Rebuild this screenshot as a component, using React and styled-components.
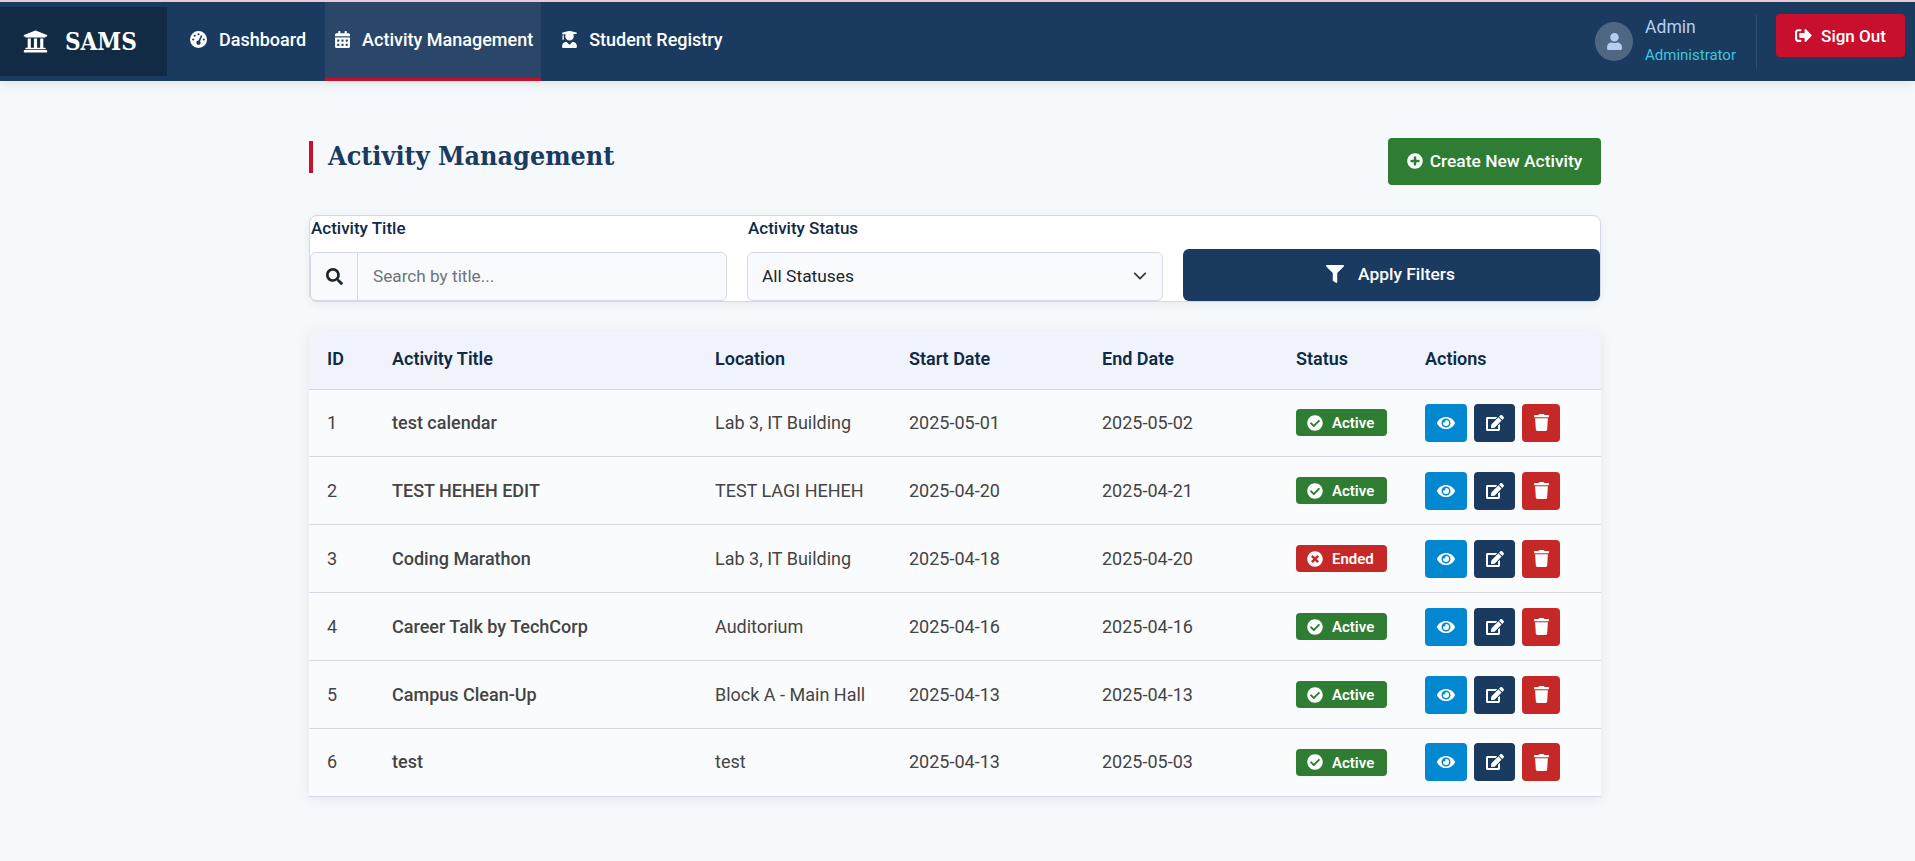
import React from "react";
import styled, { createGlobalStyle } from "styled-components";
import {
  FaUniversity,
  FaCalendarAlt,
  FaUserGraduate,
  FaUser,
  FaSignOutAlt,
  FaPlusCircle,
  FaSearch,
  FaFilter,
  FaCheckCircle,
  FaTimesCircle,
  FaEye,
  FaEdit,
  FaTrash,
} from "react-icons/fa";
import { FaGaugeHigh } from "react-icons/fa6";

const activities = [
  { id: 1, title: "test calendar", location: "Lab 3, IT Building", start: "2025-05-01", end: "2025-05-02", status: "Active" },
  { id: 2, title: "TEST HEHEH EDIT", location: "TEST LAGI HEHEH", start: "2025-04-20", end: "2025-04-21", status: "Active" },
  { id: 3, title: "Coding Marathon", location: "Lab 3, IT Building", start: "2025-04-18", end: "2025-04-20", status: "Ended" },
  { id: 4, title: "Career Talk by TechCorp", location: "Auditorium", start: "2025-04-16", end: "2025-04-16", status: "Active" },
  { id: 5, title: "Campus Clean-Up", location: "Block A - Main Hall", start: "2025-04-13", end: "2025-04-13", status: "Active" },
  { id: 6, title: "test", location: "test", start: "2025-04-13", end: "2025-05-03", status: "Active" },
];

function App() {
  return (
    <>
      <GlobalStyle />
      <Navbar>
        <Logo>
          <FaUniversity size={25} />
          <span>SAMS</span>
        </Logo>
        <NavLinks>
          <NavItem $iconWidth={17}>
            <FaGaugeHigh />
            Dashboard
          </NavItem>
          <NavItem $active $iconWidth={15}>
            <FaCalendarAlt />
            Activity Management
          </NavItem>
          <NavItem $iconWidth={15}>
            <FaUserGraduate />
            Student Registry
          </NavItem>
        </NavLinks>
        <UserArea>
          <Avatar>
            <FaUser size={17} />
          </Avatar>
          <UserInfo>
            <UserName>Admin</UserName>
            <UserRole>Administrator</UserRole>
          </UserInfo>
          <SignOut>
            <FaSignOutAlt size={17} />
            Sign Out
          </SignOut>
        </UserArea>
      </Navbar>

      <Main>
        <PageHeader>
          <PageTitle>Activity Management</PageTitle>
          <CreateButton>
            <FaPlusCircle size={16} />
            Create New Activity
          </CreateButton>
        </PageHeader>

        <FilterCard>
          <Field>
            <Label>Activity Title</Label>
            <InputGroup>
              <Addon>
                <FaSearch size={17} />
              </Addon>
              <SearchInput placeholder="Search by title..." />
            </InputGroup>
          </Field>
          <Field>
            <Label>Activity Status</Label>
            <SelectBox>
              All Statuses
              <svg width="14" height="14" viewBox="0 0 16 16" fill="none" stroke="#343a40" strokeWidth="2" strokeLinecap="round" strokeLinejoin="round">
                <path d="m2 5 6 6 6-6" />
              </svg>
            </SelectBox>
          </Field>
          <ApplyButton>
            <FaFilter size={18} />
            Apply Filters
          </ApplyButton>
        </FilterCard>

        <TableCard>
          <Table>
            <colgroup>
              <col width="65" />
              <col width="323" />
              <col width="194" />
              <col width="193" />
              <col width="194" />
              <col width="129" />
              <col />
            </colgroup>
            <thead>
              <tr>
                <Th>ID</Th>
                <Th>Activity Title</Th>
                <Th>Location</Th>
                <Th>Start Date</Th>
                <Th>End Date</Th>
                <Th>Status</Th>
                <Th>Actions</Th>
              </tr>
            </thead>
            <tbody>
              {activities.map((a) => (
                <Row key={a.id}>
                  <Td>{a.id}</Td>
                  <TitleCell>{a.title}</TitleCell>
                  <Td>{a.location}</Td>
                  <Td>{a.start}</Td>
                  <Td>{a.end}</Td>
                  <ControlCell>
                    <Badge $ended={a.status === "Ended"}>
                      {a.status === "Ended" ? <FaTimesCircle size={16} /> : <FaCheckCircle size={16} />}
                      <span>{a.status}</span>
                    </Badge>
                  </ControlCell>
                  <ControlCell>
                    <Actions>
                      <ActionButton $bg="#0288d1" $w={42}>
                        <FaEye size={18} />
                      </ActionButton>
                      <ActionButton $bg="#1a3a5f" $w={41}>
                        <FaEdit size={18} />
                      </ActionButton>
                      <ActionButton $bg="#c62828" $w={38}>
                        <FaTrash size={17} />
                      </ActionButton>
                    </Actions>
                  </ControlCell>
                </Row>
              ))}
            </tbody>
          </Table>
        </TableCard>
      </Main>
    </>
  );
}

export default App;

const GlobalStyle = createGlobalStyle`
  * {
    box-sizing: border-box;
  }
  body {
    margin: 0;
    min-height: 861px;
    background: #f5f9fc;
    font-family: Roboto, "Liberation Sans", sans-serif;
    color: #444;
    overflow: hidden;
  }
`;

const Navbar = styled.header`
  height: 81px;
  display: flex;
  align-items: stretch;
  background: #1a3a5f;
  border-top: 2px solid #e8cbd4;
  box-shadow: 0 2px 10px rgba(0, 0, 0, 0.1);
`;

const Logo = styled.div`
  width: 167px;
  margin: 5px 13px 5px 0;
  padding-left: 23px;
  display: flex;
  align-items: center;
  gap: 17px;
  background: #122b44;
  color: #fff;
  span {
    font-family: "DejaVu Serif", serif;
    font-weight: 700;
    font-size: 24px;
    font-stretch: condensed;
  }
`;

const NavLinks = styled.nav`
  display: flex;
  gap: 11px;
`;

const NavItem = styled.a`
  display: flex;
  align-items: center;
  gap: 12px;
  padding: 0 8px 2px 10px;
  color: #fff;
  font-size: 18px;
  font-weight: 500;
  background: ${(props) => (props.$active ? "rgba(255, 255, 255, 0.07)" : "transparent")};
  border-bottom: 3px solid ${(props) => (props.$active ? "#c8102e" : "transparent")};
  svg {
    width: ${(props) => props.$iconWidth}px;
    height: 17px;
    flex: none;
  }
`;

const UserArea = styled.div`
  margin-left: auto;
  display: flex;
  align-items: center;
  padding-right: 10px;
`;

const Avatar = styled.div`
  width: 38px;
  height: 39px;
  border-radius: 50%;
  background: #4f6783;
  color: #b5cdf0;
  display: flex;
  align-items: center;
  justify-content: center;
`;

const UserInfo = styled.div`
  margin-left: 12px;
  padding: 3px 20px 5px 0;
  height: 55px;
  border-right: 1px solid #2f4c6e;
  display: flex;
  flex-direction: column;
  justify-content: space-between;
`;

const UserName = styled.div`
  font-size: 17.6px;
  line-height: 21px;
  color: #b5cdf0;
`;

const UserRole = styled.div`
  font-size: 15px;
  line-height: 18px;
  color: #3cc8dc;
`;

const SignOut = styled.button`
  margin-left: 19px;
  width: 129px;
  height: 43px;
  margin-bottom: 12px;
  border: 0;
  border-radius: 4px;
  background: #c8102e;
  color: #fff;
  font-family: inherit;
  font-size: 17px;
  font-weight: 500;
  display: flex;
  align-items: center;
  justify-content: center;
  gap: 9px;
`;

const Main = styled.main`
  padding: 57px 314px 0 309px;
`;

const PageHeader = styled.div`
  display: flex;
  justify-content: space-between;
  align-items: flex-start;
  height: 77px;
`;

const PageTitle = styled.h1`
  margin: 3px 0 0;
  padding-left: 15px;
  height: 32px;
  line-height: 30px;
  border-left: 4px solid #c8102e;
  color: #1a3a5f;
  font-family: "DejaVu Serif", serif;
  font-size: 26.7px;
  font-stretch: condensed;
  font-weight: 700;
`;

const CreateButton = styled.button`
  width: 213px;
  height: 47px;
  padding: 0 0 2px;
  border: 0;
  border-radius: 4px;
  background: #2e7d32;
  color: #fff;
  font-family: inherit;
  font-size: 17.4px;
  font-weight: 500;
  display: flex;
  align-items: center;
  justify-content: center;
  gap: 7px;
`;

const FilterCard = styled.section`
  height: 87px;
  display: grid;
  grid-template-columns: 417px 416px 417px;
  column-gap: 20px;
  background: #fff;
  border: 1px solid #d5d9e6;
  border-radius: 8px;
  box-shadow: 0 2px 10px rgba(0, 0, 0, 0.06);
`;

const Field = styled.div`
  display: flex;
  flex-direction: column;
  justify-content: space-between;
`;

const Label = styled.label`
  padding: 2px 0 0 1px;
  font-size: 17px;
  font-weight: 500;
  color: #0f2a47;
`;

const InputGroup = styled.div`
  height: 49px;
  display: flex;
  background: #f9fafd;
  border: 1px solid #d5d9e6;
  border-radius: 6px;
`;

const Addon = styled.div`
  width: 47px;
  display: flex;
  align-items: center;
  justify-content: center;
  color: #1c2430;
  border-right: 1px solid #d5d9e6;
`;

const SearchInput = styled.input`
  flex: 1;
  border: 0;
  outline: 0;
  background: transparent;
  padding: 0 15px 2px;
  font-family: inherit;
  font-size: 17.2px;
  color: #444;
  &::placeholder {
    color: #6c757d;
    opacity: 1;
  }
`;

const SelectBox = styled.div`
  height: 49px;
  padding: 0 15px 2px 14px;
  display: flex;
  align-items: center;
  justify-content: space-between;
  background: #f9fafd;
  border: 1px solid #d5d9e6;
  border-radius: 6px;
  font-size: 17.4px;
  color: #212529;
`;

const ApplyButton = styled.button`
  align-self: end;
  height: 52px;
  padding: 0 2px 2px 0;
  border: 0;
  border-radius: 6px;
  background: #1a3a5f;
  color: #fff;
  font-family: inherit;
  font-size: 17.4px;
  font-weight: 500;
  display: flex;
  align-items: center;
  justify-content: center;
  gap: 14px;
`;

const TableCard = styled.section`
  margin-top: 29px;
  box-shadow: 0 2px 12px rgba(0, 0, 0, 0.08);
  background: #fafbfd;
`;

const Table = styled.table`
  width: 100%;
  border-collapse: collapse;
  table-layout: fixed;
`;

const Th = styled.th`
  height: 58px;
  padding: 0 18px 2px;
  text-align: left;
  background: #f0f4fa;
  color: #0f2a47;
  font-size: 18px;
  font-weight: 600;
  border-bottom: 1px solid #d5d9e6;
`;

const Row = styled.tr`
  height: 67.9px;
  border-bottom: 1px solid #d5d9e6;
`;

const Td = styled.td`
  padding: 0 18px 1px;
  font-size: 18px;
  color: #444;
`;

const TitleCell = styled(Td)`
  font-weight: 500;
`;

const ControlCell = styled(Td)`
  padding: 0 18px;
`;

const Badge = styled.span`
  width: 91px;
  height: 27px;
  padding-left: 11px;
  display: inline-flex;
  align-items: center;
  gap: 9px;
  border-radius: 4px;
  background: ${(props) => (props.$ended ? "#c62828" : "#2e7d32")};
  color: #fff;
  font-size: 15px;
  font-weight: 600;
  vertical-align: middle;
  span {
    padding-top: 1px;
  }
`;

const Actions = styled.div`
  display: flex;
  gap: 7px;
`;

const ActionButton = styled.button`
  width: ${(props) => props.$w}px;
  height: 38px;
  padding: 0;
  border: 0;
  border-radius: 4px;
  background: ${(props) => props.$bg};
  color: #fff;
  display: flex;
  align-items: center;
  justify-content: center;
`;
